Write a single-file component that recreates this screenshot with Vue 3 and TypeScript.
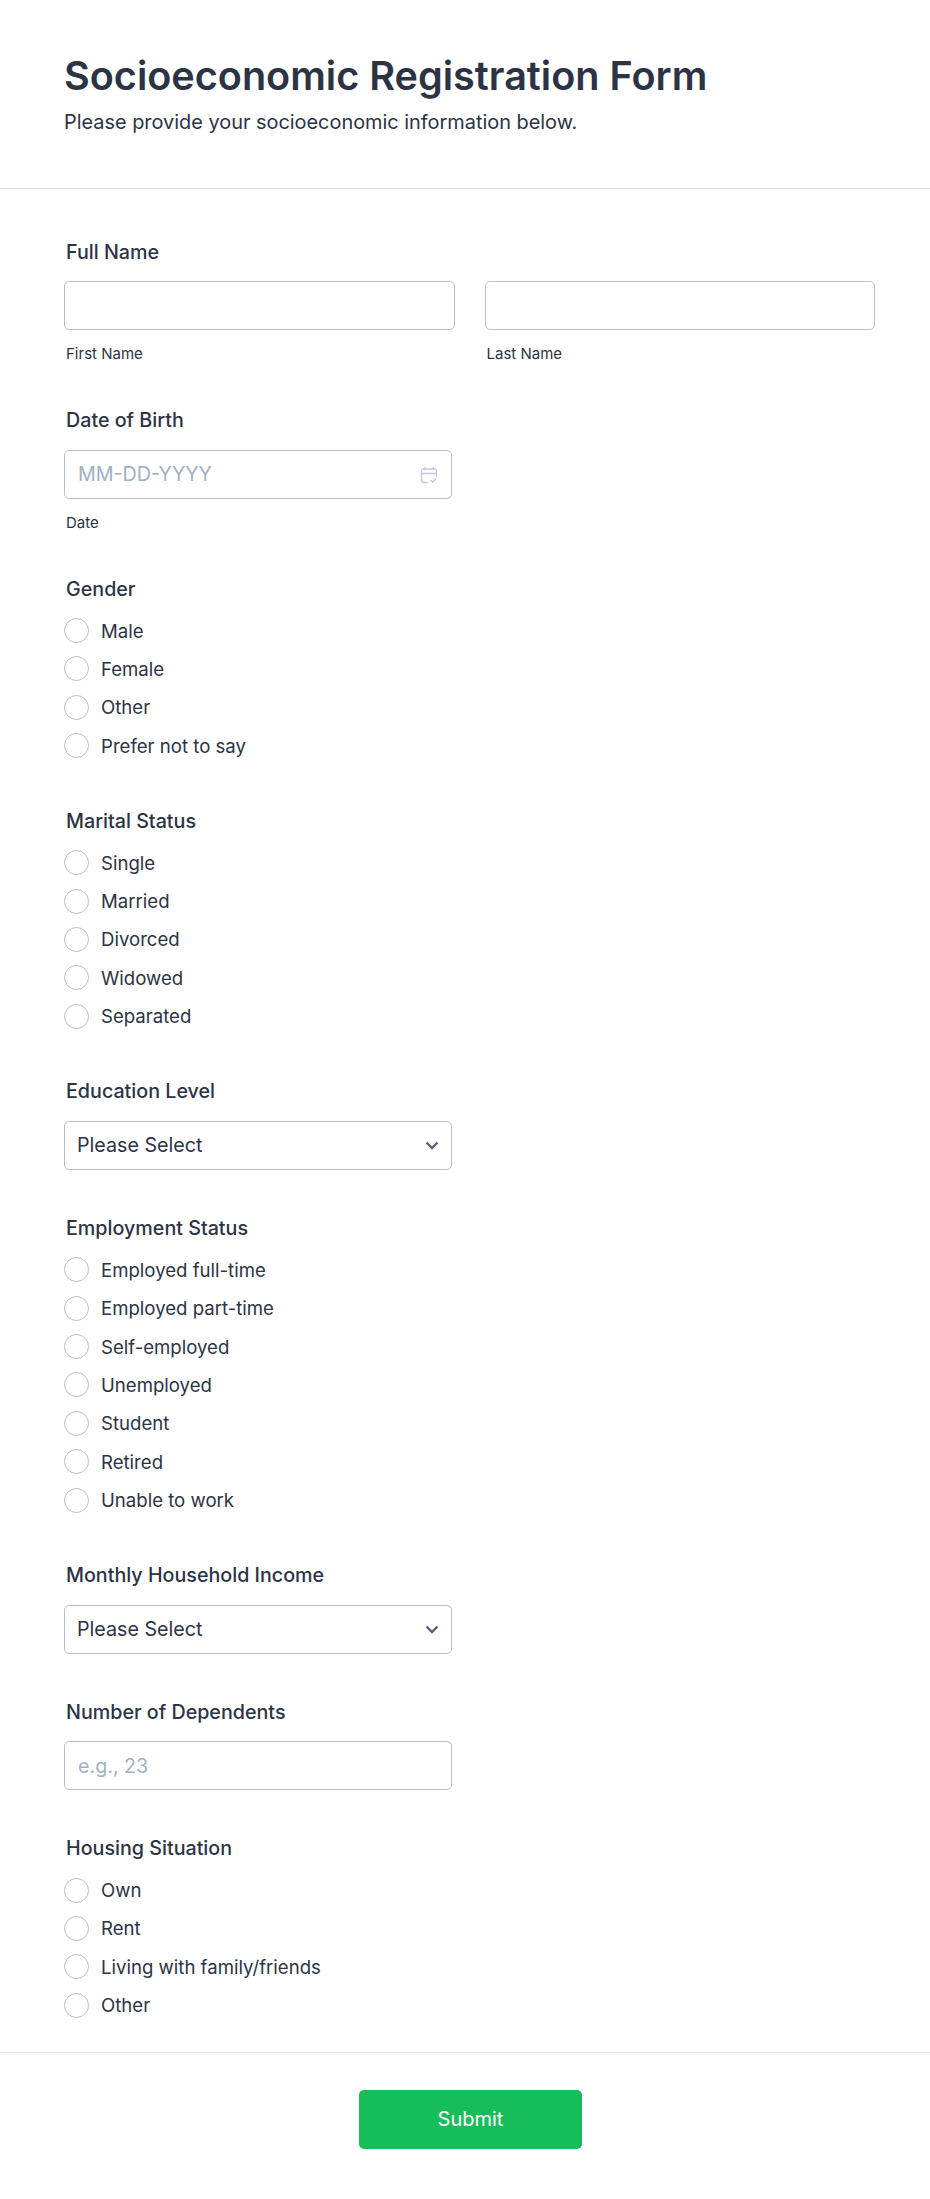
<script setup lang="ts">
interface Field { label: string; kind: 'radio' | 'select'; options?: string[] }
const groupA: Field[] = [
  { label: 'Gender', kind: 'radio', options: ['Male', 'Female', 'Other', 'Prefer not to say'] },
  { label: 'Marital Status', kind: 'radio', options: ['Single', 'Married', 'Divorced', 'Widowed', 'Separated'] },
  { label: 'Education Level', kind: 'select' },
  { label: 'Employment Status', kind: 'radio', options: ['Employed full-time', 'Employed part-time', 'Self-employed', 'Unemployed', 'Student', 'Retired', 'Unable to work'] },
  { label: 'Monthly Household Income', kind: 'select' },
]
const housing: string[] = ['Own', 'Rent', 'Living with family/friends', 'Other']
</script>

<template>
  <main class="page">
    <header class="head">
      <h1>Socioeconomic Registration Form</h1>
      <p>Please provide your socioeconomic information below.</p>
    </header>
    <form class="body" @submit.prevent>
      <section class="field has-sub">
        <div class="label">Full Name</div>
        <div class="name-row">
          <div class="col">
            <input class="box" type="text" aria-label="First Name" />
            <div class="sub">First Name</div>
          </div>
          <div class="col">
            <input class="box" type="text" aria-label="Last Name" />
            <div class="sub">Last Name</div>
          </div>
        </div>
      </section>

      <section class="field has-sub">
        <div class="label">Date of Birth</div>
        <div class="short wrap">
          <input class="box" type="text" placeholder="MM-DD-YYYY" aria-label="Date" />
          <svg class="cal" width="18" height="18" viewBox="0 0 18 18" fill="none" stroke="#c3c8d8" stroke-width="1.300">
            <path d="M8 16.500H3.200A1.700 1.700 0 0 1 1.500 14.800V4.700A1.700 1.700 0 0 1 3.200 3h11.600a1.700 1.700 0 0 1 1.700 1.700V11" />
            <path d="M1.500 7.500h15M5 1v3.500M13 1v3.500" />
            <path d="M10.500 14l2 2 3.500-3.500" />
          </svg>
        </div>
        <div class="sub">Date</div>
      </section>

      <section v-for="f in groupA" :key="f.label" class="field" :class="{ list: f.kind === 'radio' }">
        <div class="label">{{ f.label }}</div>
        <div v-if="f.kind === 'radio'" class="radios">
          <label v-for="o in f.options" :key="o" class="radio">
            <span class="dot"></span>{{ o }}
          </label>
        </div>
        <div v-else class="short wrap">
          <select class="box pick" :aria-label="f.label"><option>Please Select</option></select>
          <svg class="chev" width="14" height="9" viewBox="0 0 14 9" fill="none" stroke="#57607a" stroke-width="2.400"><path d="M1.500 1.500 7 7l5.500-5.500" /></svg>
        </div>
      </section>

      <section class="field">
        <div class="label">Number of Dependents</div>
        <div class="short"><input class="box" type="text" placeholder="e.g., 23" aria-label="Number of Dependents" /></div>
      </section>

      <section class="field last">
        <div class="label">Housing Situation</div>
        <div class="radios">
          <label v-for="o in housing" :key="o" class="radio"><span class="dot"></span>{{ o }}</label>
        </div>
      </section>

      <footer class="foot"><button class="submit" type="submit">Submit</button></footer>
    </form>
  </main>
</template>

<style scoped>
.page {
  width: 930px;
  height: 2199px;
  background: #fff;
  color: #2c3345;
  font-family: Inter, "Noto Sans", sans-serif;
  overflow: hidden;
}
.head {
  height: 189px;
  box-sizing: border-box;
  padding: 52px 64px 0;
  border-bottom: 1px solid #dcdfe9;
}
h1 {
  margin: 0;
  font-size: 39.600px;
  line-height: 49px;
  font-weight: 600;
}
p {
  margin: 9px 0 0;
  font-size: 19.900px;
  line-height: 24px;
}
.body {
  padding-top: 49.500px;
}
.field {
  padding: 0 55px 0 64px;
  margin-bottom: 45px;
}
.field.has-sub {
  margin-bottom: 44px;
}
.field.list {
  margin-bottom: 49.500px;
}
.field.last {
  margin-bottom: 34px;
}
.label {
  padding-left: 2px;
  font-size: 19.700px;
  line-height: 26px;
  font-weight: 450;
  margin-bottom: 16.500px;
}
.name-row {
  display: flex;
  gap: 30px;
}
.col {
  width: 391px;
}
.short {
  width: 388px;
}
.wrap {
  position: relative;
}
.box {
  display: block;
  width: 100%;
  height: 49px;
  box-sizing: border-box;
  padding: 0 13px;
  border: 1px solid #b8bdd0;
  border-radius: 5px;
  background: #fff;
  color: #2c3345;
  font: 400 19.700px Inter, "Noto Sans", sans-serif;
}
.box::placeholder {
  color: #a0b0c6;
  opacity: 1;
}
.pick {
  appearance: none;
  padding: 0 12px;
}
.cal {
  position: absolute;
  right: 14px;
  top: 16px;
}
.chev {
  position: absolute;
  right: 13px;
  top: 20px;
}
.sub {
  padding-left: 2px;
  margin-top: 15px;
  font-size: 15px;
  line-height: 18px;
}
.radios {
  display: flex;
  flex-direction: column;
  gap: 13.400px;
}
.radio {
  display: flex;
  align-items: center;
  height: 25px;
  font-size: 18.600px;
}
.dot {
  width: 25px;
  height: 25px;
  box-sizing: border-box;
  border: 1.300px solid #b8bdd0;
  border-radius: 50%;
  margin-right: 12px;
}
.foot {
  height: 146px;
  box-sizing: border-box;
  border-top: 1px solid #e3e7ee;
  padding: 37px 55px 0 66px;
  display: flex;
  justify-content: center;
}
.submit {
  width: 223px;
  height: 59px;
  border: 0;
  border-radius: 5px;
  background: #18bd5b;
  color: #fff;
  font: 400 20px Inter, "Noto Sans", sans-serif;
}
</style>

<style>
html, body { background: #fff; }
</style>
